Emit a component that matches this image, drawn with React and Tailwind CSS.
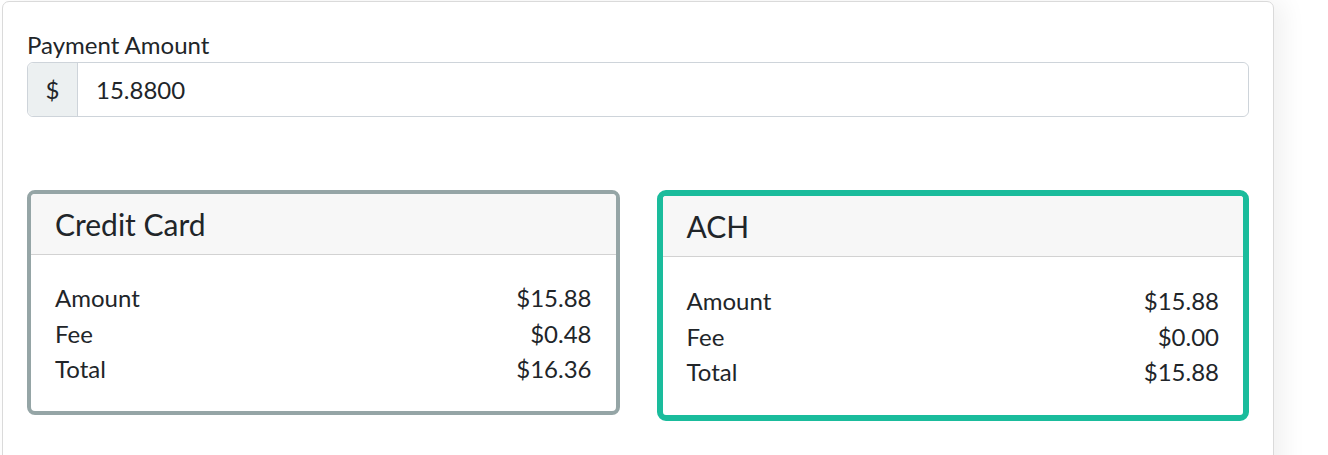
export default function App() {
  const cards = [
    {
      title: "Credit Card",
      rows: [["Amount", "$15.88"], ["Fee", "$0.48"], ["Total", "$16.36"]],
      selected: false,
    },
    {
      title: "ACH",
      rows: [["Amount", "$15.88"], ["Fee", "$0.00"], ["Total", "$15.88"]],
      selected: true,
    },
  ];

  return (
    <div className="h-[455px] overflow-hidden bg-white text-[#212529]" style={{ fontFamily: "Lato, 'Open Sans', sans-serif" }}>
      <div className="ml-[2px] mt-px min-h-[500px] w-[1272px] rounded-[7px] border border-[#dadada] bg-white shadow-[10px_0_24px_rgba(0,0,0,0.06)]">
        <div className="pl-[24px] pr-[24px] pt-[29px]">
          <label className="mb-[3px] block text-[24px] leading-[28px]">Payment Amount</label>
          <div className="flex h-[55px] rounded-[6px] border border-[#ced4da]">
            <span className="flex w-[50px] items-center justify-center rounded-l-[6px] border-r border-[#ced4da] bg-[#ecf0f1] text-[24px]">$</span>
            <input
              className="min-w-0 flex-1 rounded-r-[6px] bg-white px-[18px] text-[24px] text-[#212529] outline-none"
              defaultValue="15.8800"
            />
          </div>

          <div className="mt-[73px] grid grid-cols-2 items-start gap-[37px]">
            {cards.map((card) => (
              <div
                key={card.title}
                className={
                  card.selected
                    ? "overflow-hidden rounded-[9px] border-[6px] border-[#1abc9c]"
                    : "overflow-hidden rounded-[8px] border-4 border-[#95a5a6]"
                }
              >
                <div className="flex h-[61px] items-center border-b border-[#d2d2d2] bg-[#f7f7f7] px-[24px]">
                  <h3 className="text-[30px] leading-none">{card.title}</h3>
                </div>
                <div
                  className={
                    card.selected
                      ? "px-[24px] pb-[25px] pt-[26px] text-[24px] leading-[35.5px]"
                      : "px-[24px] pb-[24px] pt-[25px] text-[24px] leading-[35.5px]"
                  }
                >
                  {card.rows.map(([label, value]) => (
                    <div key={label} className="flex justify-between">
                      <span>{label}</span>
                      <span>{value}</span>
                    </div>
                  ))}
                </div>
              </div>
            ))}
          </div>
        </div>
      </div>
    </div>
  );
}
